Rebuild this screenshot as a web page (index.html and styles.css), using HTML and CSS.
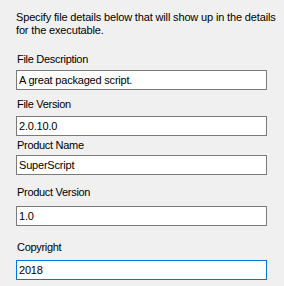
FILE: index.html
```html
<!DOCTYPE html>
<html lang="en">
<head>
    <meta charset="UTF-8">
    <title>File Details</title>
    <link rel="stylesheet" href="styles.css">
</head>
<body>
    <div class="panel">
        <p class="intro">Specify file details below that will show up in the details for the executable.</p>

        <!-- Version info fields -->
        <div class="field desc">
            <label for="fileDescription">File Description</label>
            <input type="text" id="fileDescription" value="A great packaged script.">
        </div>
        <div class="field fver">
            <label for="fileVersion">File Version</label>
            <input type="text" id="fileVersion" value="2.0.10.0">
        </div>
        <div class="field pname">
            <label for="productName">Product Name</label>
            <input type="text" id="productName" value="SuperScript">
        </div>
        <div class="field pver">
            <label for="productVersion">Product Version</label>
            <input type="text" id="productVersion" value="1.0">
        </div>
        <div class="field copy">
            <label for="copyright">Copyright</label>
            <input type="text" id="copyright" class="focused" value="2018">
        </div>
    </div>
</body>
</html>
```

FILE: styles.css
```css
body {
    margin: 0;
    background-color: #f0f0f0;
    font-family: "Liberation Sans", Arial, sans-serif;
    font-size: 11px;
    color: #000;
}
.panel {
    padding: 11px 0 0 16px;
}
.intro {
    margin: 0;
    width: 264px;
    line-height: 13px;
    letter-spacing: -0.15px;
}
.field label {
    display: block;
    line-height: 13px;
    padding-left: 1px;
    letter-spacing: -0.3px;
}
.field input {
    display: block;
    box-sizing: border-box;
    width: 251px;
    height: 20px;
    margin: 0;
    padding: 0 2px;
    border: 1px solid #7a7a7a;
    background-color: #fff;
    font-family: "Liberation Sans", Arial, sans-serif;
    font-size: 11px;
    letter-spacing: -0.2px;
    color: #000;
    outline: none;
}
.field input.focused {
    border-color: #0078d7;
}
.desc { margin-top: 16px; }
.desc label { margin-bottom: 4px; }
.fver { margin-top: 8px; }
.fver label { margin-bottom: 5px; }
.pname { margin-top: 3px; }
.pname label { margin-bottom: 3px; }
.pver { margin-top: 11px; }
.pver label { margin-bottom: 7px; }
.copy { margin-top: 15px; }
.copy label { margin-bottom: 6px; }
```
